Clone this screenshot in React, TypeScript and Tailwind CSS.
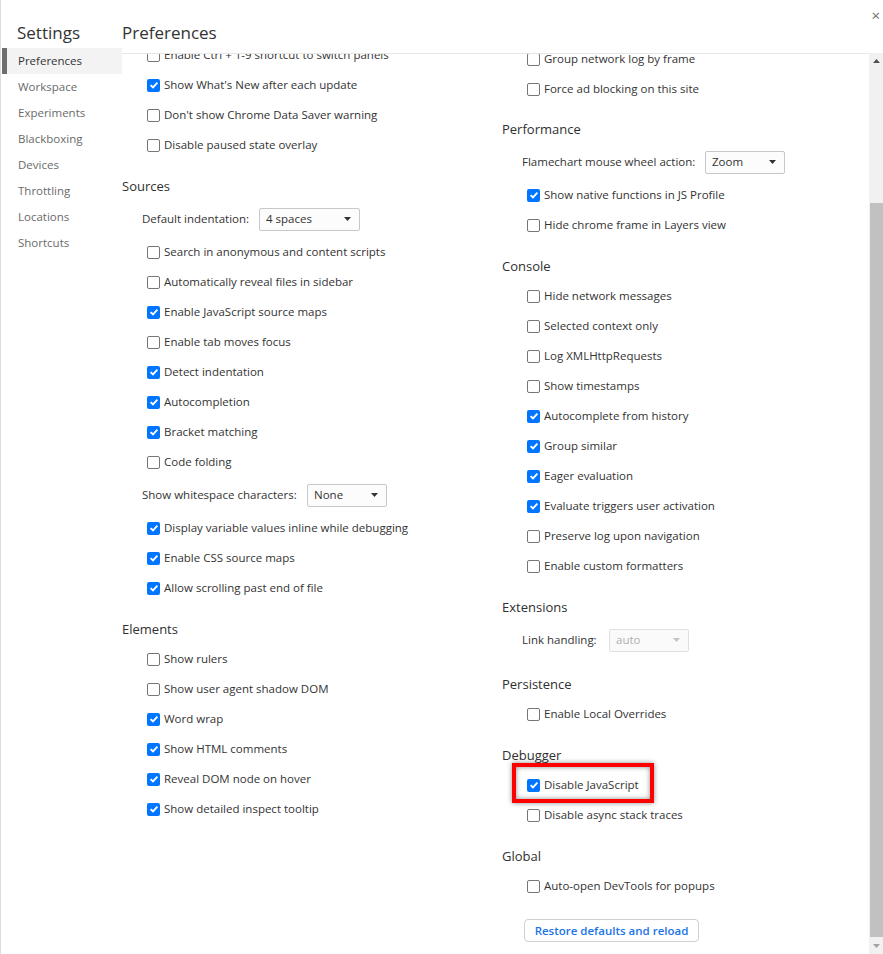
import React from "react";

type Row =
  | { t: "h"; label: string; tight?: boolean }
  | { t: "c"; label: string; on?: boolean; mark?: boolean }
  | { t: "s"; label: string; value: string; lw: number; sw: number; disabled?: boolean }
  | { t: "b"; label: string };

const col1: Row[] = [
  { t: "c", label: "Enable Ctrl + 1-9 shortcut to switch panels" },
  { t: "c", label: "Show What's New after each update", on: true },
  { t: "c", label: "Don't show Chrome Data Saver warning" },
  { t: "c", label: "Disable paused state overlay" },
  { t: "h", label: "Sources" },
  { t: "s", label: "Default indentation:", value: "4 spaces", lw: 117, sw: 101 },
  { t: "c", label: "Search in anonymous and content scripts" },
  { t: "c", label: "Automatically reveal files in sidebar" },
  { t: "c", label: "Enable JavaScript source maps", on: true },
  { t: "c", label: "Enable tab moves focus" },
  { t: "c", label: "Detect indentation", on: true },
  { t: "c", label: "Autocompletion", on: true },
  { t: "c", label: "Bracket matching", on: true },
  { t: "c", label: "Code folding" },
  { t: "s", label: "Show whitespace characters:", value: "None", lw: 165, sw: 80 },
  { t: "c", label: "Display variable values inline while debugging", on: true },
  { t: "c", label: "Enable CSS source maps", on: true },
  { t: "c", label: "Allow scrolling past end of file", on: true },
  { t: "h", label: "Elements" },
  { t: "c", label: "Show rulers" },
  { t: "c", label: "Show user agent shadow DOM" },
  { t: "c", label: "Word wrap", on: true },
  { t: "c", label: "Show HTML comments", on: true },
  { t: "c", label: "Reveal DOM node on hover", on: true },
  { t: "c", label: "Show detailed inspect tooltip", on: true },
];

const col2: Row[] = [
  { t: "c", label: "Group network log by frame" },
  { t: "c", label: "Force ad blocking on this site" },
  { t: "h", label: "Performance", tight: true },
  { t: "s", label: "Flamechart mouse wheel action:", value: "Zoom", lw: 183, sw: 80 },
  { t: "c", label: "Show native functions in JS Profile", on: true },
  { t: "c", label: "Hide chrome frame in Layers view" },
  { t: "h", label: "Console" },
  { t: "c", label: "Hide network messages" },
  { t: "c", label: "Selected context only" },
  { t: "c", label: "Log XMLHttpRequests" },
  { t: "c", label: "Show timestamps" },
  { t: "c", label: "Autocomplete from history", on: true },
  { t: "c", label: "Group similar", on: true },
  { t: "c", label: "Eager evaluation", on: true },
  { t: "c", label: "Evaluate triggers user activation", on: true },
  { t: "c", label: "Preserve log upon navigation" },
  { t: "c", label: "Enable custom formatters" },
  { t: "h", label: "Extensions" },
  { t: "s", label: "Link handling:", value: "auto", lw: 87, sw: 80, disabled: true },
  { t: "h", label: "Persistence" },
  { t: "c", label: "Enable Local Overrides" },
  { t: "h", label: "Debugger" },
  { t: "c", label: "Disable JavaScript", on: true, mark: true },
  { t: "c", label: "Disable async stack traces" },
  { t: "h", label: "Global" },
  { t: "c", label: "Auto-open DevTools for popups" },
  { t: "b", label: "Restore defaults and reload" },
];

function Arrow({ color }: { color: string }) {
  return (
    <svg width="7" height="4" viewBox="0 0 7 4">
      <path d="M0 0 H7 L3.5 4 Z" fill={color} />
    </svg>
  );
}

function RowView({ r }: { r: Row }) {
  if (r.t === "h") {
    return (
      <div
        className={`text-[13px] leading-[20px] text-[#303030] ${
          r.tight ? "h-[40px] pt-[15px]" : "h-[41px] pt-[16px]"
        }`}
      >
        {r.label}
      </div>
    );
  }
  if (r.t === "c") {
    return (
      <div className="relative flex h-[30px] items-center pl-[25px]">
        {r.on ? (
          <span className="flex h-[13px] w-[13px] shrink-0 items-center justify-center rounded-[2px] bg-[#0075ff]">
            <svg width="10" height="10" viewBox="0 0 10 10">
              <path d="M1.6 5.1 L4 7.4 L8.4 2.6" stroke="white" strokeWidth="1.9" fill="none" />
            </svg>
          </span>
        ) : (
          <span className="h-[13px] w-[13px] shrink-0 rounded-[2px] border border-[#767676] bg-white" />
        )}
        <span className="ml-[4px] whitespace-nowrap text-[11.5px] text-[#333333]">{r.label}</span>
        {r.mark && (
          <div className="absolute -top-[7px] left-[10px] h-[40px] w-[142px] border-[4px] border-[#ff0000] shadow-[0_0_5px_rgba(0,0,0,0.45),inset_0_0_5px_rgba(0,0,0,0.45)]" />
        )}
      </div>
    );
  }
  if (r.t === "s") {
    return (
      <div className="flex h-[36px] items-center pl-[20px]">
        <span className="shrink-0 whitespace-nowrap text-[11.5px] text-[#333333]" style={{ width: r.lw }}>
          {r.label}
        </span>
        <div
          className={`flex h-[23px] items-center justify-between rounded-[2px] border pl-[6px] pr-[8px] text-[11.5px] ${
            r.disabled ? "border-[#e0e0e0] bg-[#fafafa] text-[#b0b0b0]" : "border-[#c8c8c8] bg-[#fcfcfc] text-[#333333]"
          }`}
          style={{ width: r.sw }}
        >
          <span>{r.value}</span>
          <Arrow color={r.disabled ? "#c4c4c4" : "#333333"} />
        </div>
      </div>
    );
  }
  return (
    <div className="pl-[22px] pt-[18px]">
      <div className="flex h-[23px] w-[175px] items-center justify-center rounded-[4px] border border-[#d0d0d0] bg-white text-[11.5px] font-semibold text-[#1a73e8]">
        {r.label}
      </div>
    </div>
  );
}

const nav = ["Preferences", "Workspace", "Experiments", "Blackboxing", "Devices", "Throttling", "Locations", "Shortcuts"];

export default function App() {
  return (
    <div className="flex h-[954px] w-[883px] overflow-hidden border-l border-[#dedede] bg-white font-['Open_Sans','Noto_Sans',sans-serif]">
      <aside className="w-[121px] shrink-0">
        <div className="h-[48px] pl-[16px] pt-[21px] text-[17px] leading-[24px] text-[#333333]">Settings</div>
        <nav>
          {nav.map((n, i) =>
            i === 0 ? (
              <div key={n} className="flex h-[26px] items-center">
                <div className="ml-[1px] h-full w-[5px] bg-[#6e6e6e]" />
                <div className="flex h-full flex-1 items-center bg-[#f3f3f3] pl-[11px] text-[11.5px] text-[#333333]">{n}</div>
              </div>
            ) : (
              <div key={n} className="flex h-[26px] items-center pl-[17px] text-[11.5px] text-[#6a6a6a]">
                {n}
              </div>
            )
          )}
        </nav>
      </aside>
      <main className="flex flex-1 flex-col">
        <header className="flex h-[53px] shrink-0 justify-between">
          <div className="pt-[21px] text-[17px] leading-[24px] text-[#333333]">Preferences</div>
          <div className="pr-[3px] pt-[6px] text-[15px] leading-[18px] text-[#6e6e6e]">×</div>
        </header>
        <div className="flex min-h-0 flex-1">
          <div className="min-w-0 flex-1 overflow-hidden border-t border-[#e6e6e6]">
            <div className="flex">
              <div className="-mt-[14px] w-[380px] shrink-0">
                {col1.map((r, i) => (
                  <RowView key={i} r={r} />
                ))}
              </div>
              <div className="-mt-[10px] flex-1">
                {col2.map((r, i) => (
                  <RowView key={i} r={r} />
                ))}
              </div>
            </div>
          </div>
          <div className="flex w-[14px] shrink-0 flex-col bg-[#f1f1f1]">
            <div className="flex h-[14px] items-center justify-center pt-[2px]">
              <svg width="7" height="4" viewBox="0 0 7 4">
                <path d="M0 4 H7 L3.5 0 Z" fill="#505050" />
              </svg>
            </div>
            <div className="h-[136px]" />
            <div className="ml-[1px] h-[734px] bg-[#c1c1c1]" />
            <div className="flex flex-1 items-center justify-center">
              <Arrow color="#a3a3a3" />
            </div>
          </div>
        </div>
      </main>
    </div>
  );
}
